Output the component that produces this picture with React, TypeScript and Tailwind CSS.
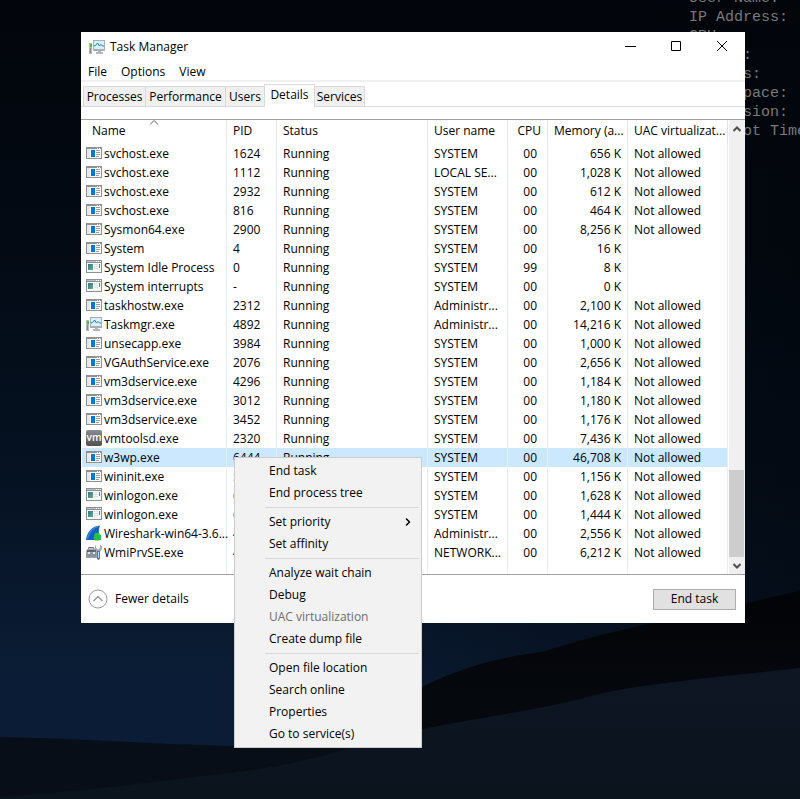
import { ChevronRight } from "lucide-react";
import clsx from "clsx";

type IconName = "console" | "window" | "taskmgr" | "vm" | "wireshark" | "toolbox";

type Process = {
  icon: IconName;
  name: string;
  pid: string;
  user: string;
  cpu?: string;
  memory: string;
  uac?: string;
  selected?: boolean;
};

const NA = "Not allowed";

const processes: Process[] = [
  { icon: "console", name: "svchost.exe", pid: "1624", user: "SYSTEM", memory: "656 K", uac: NA },
  { icon: "console", name: "svchost.exe", pid: "1112", user: "LOCAL SE...", memory: "1,028 K", uac: NA },
  { icon: "console", name: "svchost.exe", pid: "2932", user: "SYSTEM", memory: "612 K", uac: NA },
  { icon: "console", name: "svchost.exe", pid: "816", user: "SYSTEM", memory: "464 K", uac: NA },
  { icon: "console", name: "Sysmon64.exe", pid: "2900", user: "SYSTEM", memory: "8,256 K", uac: NA },
  { icon: "console", name: "System", pid: "4", user: "SYSTEM", memory: "16 K" },
  { icon: "window", name: "System Idle Process", pid: "0", user: "SYSTEM", cpu: "99", memory: "8 K" },
  { icon: "window", name: "System interrupts", pid: "-", user: "SYSTEM", memory: "0 K" },
  { icon: "console", name: "taskhostw.exe", pid: "2312", user: "Administr...", memory: "2,100 K", uac: NA },
  { icon: "taskmgr", name: "Taskmgr.exe", pid: "4892", user: "Administr...", memory: "14,216 K", uac: NA },
  { icon: "console", name: "unsecapp.exe", pid: "3984", user: "SYSTEM", memory: "1,000 K", uac: NA },
  { icon: "console", name: "VGAuthService.exe", pid: "2076", user: "SYSTEM", memory: "2,656 K", uac: NA },
  { icon: "console", name: "vm3dservice.exe", pid: "4296", user: "SYSTEM", memory: "1,184 K", uac: NA },
  { icon: "console", name: "vm3dservice.exe", pid: "3012", user: "SYSTEM", memory: "1,180 K", uac: NA },
  { icon: "console", name: "vm3dservice.exe", pid: "3452", user: "SYSTEM", memory: "1,176 K", uac: NA },
  { icon: "vm", name: "vmtoolsd.exe", pid: "2320", user: "SYSTEM", memory: "7,436 K", uac: NA },
  { icon: "console", name: "w3wp.exe", pid: "6444", user: "SYSTEM", memory: "46,708 K", uac: NA, selected: true },
  { icon: "console", name: "wininit.exe", pid: "536", user: "SYSTEM", memory: "1,156 K", uac: NA },
  { icon: "window", name: "winlogon.exe", pid: "608", user: "SYSTEM", memory: "1,628 K", uac: NA },
  { icon: "window", name: "winlogon.exe", pid: "600", user: "SYSTEM", memory: "1,444 K", uac: NA },
  { icon: "wireshark", name: "Wireshark-win64-3.6...", pid: "4388", user: "Administr...", memory: "2,556 K", uac: NA },
  { icon: "toolbox", name: "WmiPrvSE.exe", pid: "4020", user: "NETWORK...", memory: "6,212 K", uac: NA },
];

const tabs = [
  { label: "Processes", width: "w-[62px]" },
  { label: "Performance", width: "w-[80px]" },
  { label: "Users", width: "w-[39px]" },
  { label: "Details", width: "w-[51px]", active: true },
  { label: "Services", width: "w-[50px]" },
];

const menuGroups = [
  [{ label: "End task" }, { label: "End process tree" }],
  [{ label: "Set priority", submenu: true }, { label: "Set affinity" }],
  [{ label: "Analyze wait chain" }, { label: "Debug" }, { label: "UAC virtualization", disabled: true }, { label: "Create dump file" }],
  [{ label: "Open file location" }, { label: "Search online" }, { label: "Properties" }, { label: "Go to service(s)" }],
] as { label: string; submenu?: boolean; disabled?: boolean }[][];

const hostInfo = ["User Name:", "IP Address:", "CPU:", "Memory:", "Volumes:", "Free Space:", "OS Version:", "Snapshot Time:"];

function ProcessIcon({ name }: { name: IconName }) {
  return (
    <svg viewBox="0 0 16 16" className="block size-4 shrink-0" aria-hidden="true">
      {name === "console" && (
        <>
          <path d="M0 2h16v12H0z" fill="#8f9295" />
          <path d="M1 4h14v9H1z" fill="#fdfdfd" />
          <path d="M1 4h3v9H1z" fill="#e6e8ea" />
          <path d="M11 3h1v1h-1zM13 3h1v1h-1z" fill="#f4f4f4" />
          <path d="M5 5h4v7H5z" fill="#0078d7" />
          <path d="M10 5h4v1h-4zM10 7h4v1h-4zM10 9h4v1h-4zM10 11h3v1h-3z" fill="#9a9da0" />
        </>
      )}
      {name === "window" && (
        <>
          <defs>
            <linearGradient id="pane" x1="0" y1="0" x2="1" y2="1">
              <stop offset="0" stopColor="#3a6ea5" />
              <stop offset="1" stopColor="#5cb56c" />
            </linearGradient>
          </defs>
          <path d="M0 1h16v13H0z" fill="#8d9093" />
          <path d="M1 4h14v9H1z" fill="#f7f8f8" />
          <path d="M1 2h14v1H1z" fill="#b5bec6" />
          <path d="M10 2h1v1h-1zM12 2h1v1h-1zM14 2h1v1h-1z" fill="#fff" />
          <path d="M2 5h5v6H2z" fill="url(#pane)" />
          <path d="M8 5h4v1H8zM8 7h4v1H8zM8 9h4v1H8z" fill="#dde0e2" />
          <path d="M13 5h1v4h-1z" fill="#5f7f86" />
        </>
      )}
      {name === "taskmgr" && (
        <>
          <path d="M0 4h3v11H0z" fill="#b4b8ba" />
          <path d="M1 5h2v3H1z" fill="#42c52e" />
          <path d="M1 9h1v5H1z" fill="#84898b" />
          <path d="M4 1h12v11H4z" fill="#a9aeb2" />
          <path d="M5 2h10v8H5z" fill="#d9f1fd" />
          <path d="M5 7l1.500-.5L8.500 4l2 3L12 5.500 13.500 7H15" fill="none" stroke="#1683c4" />
          <path d="M9 12h3v1.500H9zM7 13h7v2H7z" fill="#b3b7b9" />
        </>
      )}
      {name === "vm" && (
        <>
          <defs>
            <linearGradient id="vmbg" x1="0" y1="0" x2="0" y2="1">
              <stop offset="0" stopColor="#8b8b8d" />
              <stop offset="1" stopColor="#515153" />
            </linearGradient>
          </defs>
          <rect width="16" height="16" rx="2" fill="url(#vmbg)" />
          <text x="8" y="11" textAnchor="middle" fontSize="10" fontWeight="600" fill="#fff" fontFamily="Open Sans, sans-serif">vm</text>
        </>
      )}
      {name === "wireshark" && (
        <>
          <path d="M0 15C1 7 6 1 14 0.500C12 5 12.500 10 15 15z" fill="#1262c4" />
          <path d="M1.500 13.500C3.500 7 7 3 12 1.500" fill="none" stroke="#4e9aea" />
          <path d="M9 8h4.500v2H15v4l-2 1.500H9L7.500 13z" fill="#20c53a" />
        </>
      )}
      {name === "toolbox" && (
        <>
          <path d="M2.500 5V3.500h5V5" fill="none" stroke="#6d757b" />
          <path d="M0 7l2-2.500h9V14H0z" fill="#9ba4ab" />
          <path d="M1 6h9v2H1z" fill="#5f696f" />
          <path d="M1 9h9v4H1z" fill="#87929a" />
          <path d="M2 8h2v2H2zM7 8h2v2H7z" fill="#dfe4e7" />
          <path d="M10 1v3l2 1.500L14 4V1l2 1v3l-2 2.500h-3L9 5V2z" fill="#a3acb3" />
          <path d="M11 7h3v8l-1.500 1L11 15z" fill="#4a78b0" />
          <path d="M12 8h1v6h-1z" fill="#c0d8ef" />
        </>
      )}
    </svg>
  );
}

function Wallpaper() {
  return (
    <svg viewBox="0 0 800 799" preserveAspectRatio="none" className="absolute inset-0 size-full" aria-hidden="true">
      <defs>
        <linearGradient id="sky" x1="0" y1="0" x2="0" y2="1">
          <stop offset="0" stopColor="#02050b" />
          <stop offset="0.300" stopColor="#030a14" />
          <stop offset="0.600" stopColor="#051222" />
          <stop offset="0.850" stopColor="#0b1d36" />
        </linearGradient>
        <linearGradient id="shade" x1="0" y1="0" x2="1" y2="0">
          <stop offset="0.300" stopColor="#02050a" stopOpacity="0" />
          <stop offset="1" stopColor="#02050a" stopOpacity="0.600" />
        </linearGradient>
        <linearGradient id="ridge" x1="0" y1="0" x2="0" y2="1">
          <stop offset="0" stopColor="#020306" />
          <stop offset="0.500" stopColor="#05080d" />
        </linearGradient>
        <linearGradient id="dune" x1="0" y1="0" x2="0" y2="1">
          <stop offset="0" stopColor="#0e1624" />
          <stop offset="1" stopColor="#0b131d" />
        </linearGradient>
      </defs>
      <path d="M0 0h800v799H0z" fill="url(#sky)" />
      <path d="M0 0h800v799H0z" fill="url(#shade)" />
      <path d="M0 737C80 738 160 745 235 746L420 750V799H0z" fill="#080e17" />
      <path d="M380 712C425 682 470 661 541 652C600 634 640 625 690 616S770 596 800 591V799H380z" fill="url(#ridge)" />
      <path d="M0 797C90 791 170 780 245 771S360 742 423 729S540 710 587 697S720 677 800 668V799H0z" fill="url(#dune)" />
    </svg>
  );
}

function TitleBar() {
  const button = "flex w-[46px] items-center justify-center";
  return (
    <header className="flex h-[30px] items-stretch pl-2">
      <div className="flex flex-1 items-center gap-[5px]">
        <ProcessIcon name="taskmgr" />
        <h1>Task Manager</h1>
      </div>
      <button type="button" aria-label="Minimize" className={button}>
        <svg viewBox="0 0 12 12" className="size-3"><path d="M1 5.500h11" stroke="#000" /></svg>
      </button>
      <button type="button" aria-label="Maximize" className={button}>
        <svg viewBox="0 0 12 12" className="size-3"><path d="M1.500.5h9v9h-9z" fill="none" stroke="#000" /></svg>
      </button>
      <button type="button" aria-label="Close" className={button}>
        <svg viewBox="0 0 12 12" className="size-3"><path d="M1 0l10 10M11 0L1 10" stroke="#000" /></svg>
      </button>
    </header>
  );
}

function ProcessTable() {
  const th = "relative h-6 border-r border-[#e5e5e5] p-0 px-1.5 text-left align-top font-normal leading-[22px]";
  const td = "h-[19px] border-r border-[#e4effb] p-0 px-1.5";
  return (
    <table className="w-full flex-1 table-fixed border-separate border-spacing-0 whitespace-nowrap leading-[19px]">
      <colgroup>
        <col className="w-[145px]" />
        <col className="w-[50px]" />
        <col />
        <col className="w-[80px]" />
        <col className="w-[40px]" />
        <col className="w-[80px]" />
        <col className="w-[100px]" />
      </colgroup>
      <thead>
        <tr>
          <th className={clsx(th, "pl-2.5")} aria-sort="ascending">
            Name
            <svg viewBox="0 0 9 5" className="absolute top-0 left-1/2 h-[5px] w-[9px] -translate-x-1/2">
              <path d="M.5 4.500l4-4 4 4" fill="none" stroke="#5c5c5c" />
            </svg>
          </th>
          <th className={th}>PID</th>
          <th className={th}>Status</th>
          <th className={th}>User name</th>
          <th className={clsx(th, "text-right")}>CPU</th>
          <th className={clsx(th, "text-right")}>Memory (a...</th>
          <th className={th}>UAC virtualizat...</th>
        </tr>
      </thead>
      <tbody>
        {processes.map((p) => (
          <tr key={`${p.name}-${p.pid}`} className={clsx(p.selected && "bg-[#cce8ff]")}>
            <td className={clsx(td, "pl-1")}>
              <div className="flex items-start gap-0.5">
                <span className="pt-px">
                  <ProcessIcon name={p.icon} />
                </span>
                {p.name}
              </div>
            </td>
            <td className={td}>{p.pid}</td>
            <td className={td}>Running</td>
            <td className={td}>{p.user}</td>
            <td className={clsx(td, "pr-2.5 text-right")}>{p.cpu ?? "00"}</td>
            <td className={clsx(td, "text-right")}>{p.memory}</td>
            <td className={td}>{p.uac}</td>
          </tr>
        ))}
        {/* column lines run on below the last process */}
        <tr aria-hidden="true">
          {[0, 1, 2, 3, 4, 5, 6].map((i) => (
            <td key={i} className="h-3 border-r border-[#e4effb] p-0" />
          ))}
        </tr>
      </tbody>
    </table>
  );
}

function ScrollBar() {
  return (
    <div className="ml-px flex w-4 shrink-0 flex-col bg-[#f0f0f0]">
      <button type="button" aria-label="Scroll up" className="flex h-[18px] items-center justify-center">
        <svg viewBox="0 0 8 6" className="h-1.5 w-2"><path d="M.5 5L4 1.500 7.500 5" fill="none" stroke="#505050" strokeWidth="2" /></svg>
      </button>
      <div className="flex-1" />
      <div className="mr-px h-[87px] bg-[#cdcdcd]" />
      <button type="button" aria-label="Scroll down" className="flex h-[17px] items-center justify-center">
        <svg viewBox="0 0 8 6" className="h-1.5 w-2"><path d="M.5 1L4 4.500 7.500 1" fill="none" stroke="#505050" strokeWidth="2" /></svg>
      </button>
    </div>
  );
}

function TaskManager() {
  return (
    <main className="absolute top-8 right-[55px] left-[81px] bg-white">
      <TitleBar />
      <nav className="flex h-5 gap-3.5 border-b-2 border-[#f0f0f0] pl-[7px] leading-5">
        <button type="button">File</button>
        <button type="button">Options</button>
        <button type="button">View</button>
      </nav>
      <div role="tablist" className="flex h-[25px] items-end border-b border-[#d9d9d9] pl-0.5">
        {tabs.map((t, i) => (
          <button
            key={t.label}
            type="button"
            role="tab"
            aria-selected={!!t.active}
            className={clsx(
              "flex items-center justify-center border-t border-l border-[#d9d9d9]",
              t.width,
              t.active ? "-mb-px h-[23px] border-r bg-white pb-0.5" : "h-5 bg-[#f0f0f0] pt-px",
              i === tabs.length - 1 && "border-r border-l-0",
            )}
          >
            {t.label}
          </button>
        ))}
      </div>
      <div className="mt-3 flex border-y border-[#a0a0a0] pl-px">
        <ProcessTable />
        <ScrollBar />
      </div>
      <footer className="flex h-12 items-center justify-between pr-[9px] pl-[7px]">
        <button type="button" className="flex items-center gap-[7px]">
          <svg viewBox="0 0 20 20" className="size-5" fill="none" stroke="#999">
            <circle cx="10" cy="10" r="9" />
            <path d="M5.500 12L10 7.500l4.500 4.500" strokeWidth="1.500" />
          </svg>
          Fewer details
        </button>
        <button type="button" className="h-[21px] w-[83px] border border-[#adadad] bg-[#e1e1e1]">End task</button>
      </footer>
    </main>
  );
}

function ContextMenu() {
  return (
    <div role="menu" className="absolute top-[457px] left-[234px] w-[188px] border border-[#cccccc] bg-[#f2f2f2] py-0.5">
      {menuGroups.map((group, i) => (
        <div key={i}>
          {i > 0 && <hr className="my-[3px] mr-0.5 ml-[30px] border-[#d7d7d7]" />}
          {group.map((item) => (
            <button
              key={item.label}
              type="button"
              role="menuitem"
              disabled={item.disabled}
              className="flex h-[22px] w-full items-center justify-between pr-[7px] pl-[34px] disabled:text-[#6d6d6d]"
            >
              {item.label}
              {item.submenu && <ChevronRight className="size-3" strokeWidth={3} />}
            </button>
          ))}
        </div>
      ))}
    </div>
  );
}

export default function App() {
  return (
    <div className="relative min-h-screen overflow-hidden bg-[#02050b] font-['Open_Sans',sans-serif] text-[12px] leading-[18px] text-black">
      <Wallpaper />
      <div className="absolute -top-[11px] left-[689px] font-['Liberation_Mono',monospace] text-[15px] leading-[19px] whitespace-nowrap text-[#77797c]">
        {hostInfo.map((line) => (
          <p key={line}>{line}</p>
        ))}
      </div>
      <TaskManager />
      <ContextMenu />
    </div>
  );
}
